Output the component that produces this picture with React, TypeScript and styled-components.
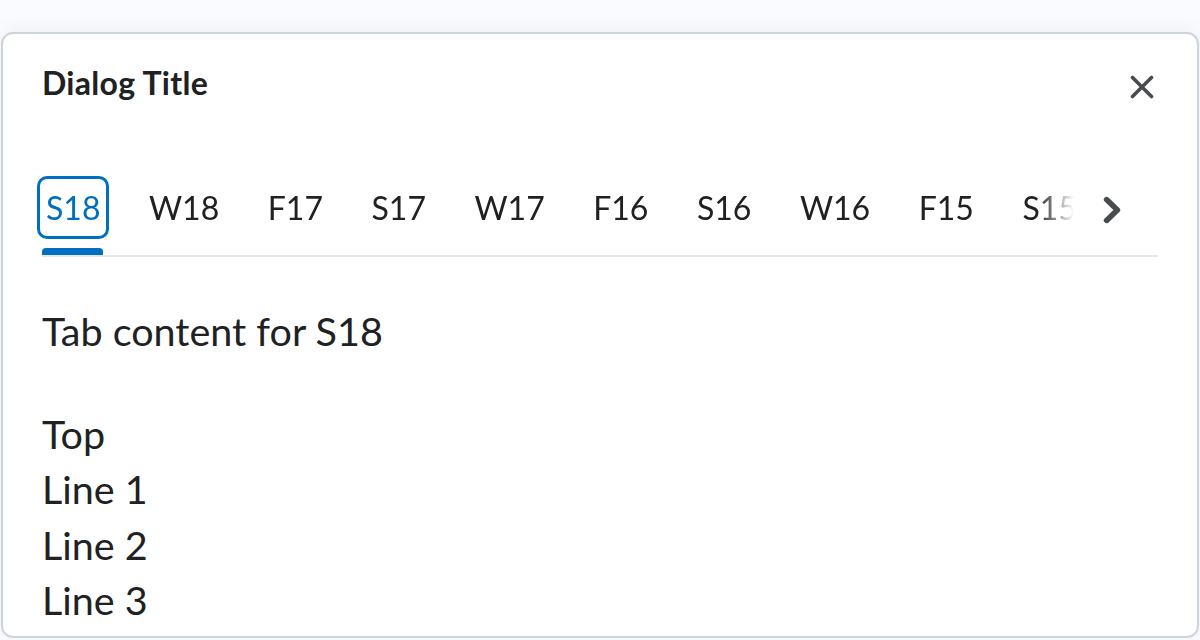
import React, { useState } from 'react'
import styled, { createGlobalStyle } from 'styled-components'

const terms = ['S18', 'W18', 'F17', 'S17', 'W17', 'F16', 'S16', 'W16', 'F15', 'S15']

const GlobalStyle = createGlobalStyle`
  html, body {
    margin: 0;
    padding: 0;
    background: #f9fbff;
    font-family: Lato, "Noto Sans", sans-serif;
    color: #202122;
  }
  * {
    box-sizing: border-box;
  }
`

const Page = styled.div`
  height: 640px;
  padding: 32px 1px 0 1px;
  overflow: hidden;
`

const Dialog = styled.section`
  height: 606px;
  background: #ffffff;
  border: 2px solid #cdd5dc;
  border-radius: 12px;
  padding: 0 39px;
  overflow: hidden;
  box-shadow: 0 -2px 22px rgba(32, 33, 34, 0.05);
`

const Header = styled.header`
  display: flex;
  align-items: flex-start;
  justify-content: space-between;
  padding-top: 30px;
`

const Title = styled.h2`
  margin: 0;
  font-size: 32px;
  line-height: 38px;
  font-weight: 700;
  letter-spacing: 0.3px;
`

const CloseButton = styled.button`
  display: flex;
  padding: 0;
  margin: 11px 4px 0 0;
  border: none;
  background: none;
  color: #494c4e;
  cursor: pointer;
`

const TabBar = styled.div`
  display: flex;
  align-items: flex-start;
  margin-top: 74px;
  border-bottom: 2px solid #e3e9f1;
`

const TabViewport = styled.div`
  flex: 1;
  display: flex;
  gap: 30.5px;
  margin-left: -5px;
  overflow: hidden;
  mask-image: linear-gradient(to right, #000 calc(100% - 50px), transparent calc(100% - 13px));
`

const Tab = styled.button`
  flex: none;
  display: flex;
  flex-direction: column;
  padding: 0;
  border: none;
  background: none;
  font: inherit;
  cursor: pointer;
`

const TabLabel = styled.span<{ $focused: boolean }>`
  padding: 8px 6px;
  border: 3px solid ${(p) => (p.$focused ? '#006fbf' : 'transparent')};
  border-radius: 10px;
  font-size: 32px;
  line-height: 41px;
  color: ${(p) => (p.$focused ? '#006fbf' : '#202122')};
  white-space: nowrap;
`

const Indicator = styled.span<{ $visible: boolean }>`
  height: 7px;
  margin: 9px 6px 0 5px;
  border-radius: 4px 4px 0 0;
  background: ${(p) => (p.$visible ? '#006fbf' : 'transparent')};
`

const ScrollButton = styled.button`
  flex: none;
  display: flex;
  align-items: center;
  justify-content: center;
  width: 48px;
  height: 68px;
  margin-right: 23px;
  padding: 0 0 0 2px;
  border: none;
  background: none;
  color: #494c4e;
  cursor: pointer;
`

const Panel = styled.div`
  padding-top: 46px;
  font-size: 39.5px;
  line-height: 55.6px;
`

const Intro = styled.p`
  margin: 0 0 47px;
`

const Line = styled.div``

const CloseIcon = () => (
  <svg width="24" height="24" viewBox="0 0 24 24" fill="none">
    <path d="M2.5 2.5L21.5 21.5M21.5 2.5L2.5 21.5" stroke="currentColor" strokeWidth="3.6" strokeLinecap="round" />
  </svg>
)

const ChevronRight = () => (
  <svg width="18" height="28" viewBox="0 0 18 28" fill="none">
    <polyline
      points="3.6,3.6 14.4,14 3.6,24.4"
      stroke="currentColor"
      strokeWidth="5.6"
      strokeLinecap="round"
      strokeLinejoin="round"
    />
  </svg>
)

const App = () => {
  const [selected, setSelected] = useState('S18')

  return (
    <>
      <GlobalStyle />
      <Page>
        <Dialog role="dialog" aria-label="Dialog Title">
          <Header>
            <Title>Dialog Title</Title>
            <CloseButton aria-label="Close">
              <CloseIcon />
            </CloseButton>
          </Header>
          <TabBar>
            <TabViewport role="tablist">
              {terms.map((t) => (
                <Tab key={t} role="tab" aria-selected={t === selected} onClick={() => setSelected(t)}>
                  <TabLabel $focused={t === selected}>{t}</TabLabel>
                  <Indicator $visible={t === selected} />
                </Tab>
              ))}
            </TabViewport>
            <ScrollButton aria-label="Scroll forward">
              <ChevronRight />
            </ScrollButton>
          </TabBar>
          <Panel role="tabpanel">
            <Intro>Tab content for {selected}</Intro>
            <Line>Top</Line>
            <Line>Line 1</Line>
            <Line>Line 2</Line>
            <Line>Line 3</Line>
          </Panel>
        </Dialog>
      </Page>
    </>
  )
}

export default App
